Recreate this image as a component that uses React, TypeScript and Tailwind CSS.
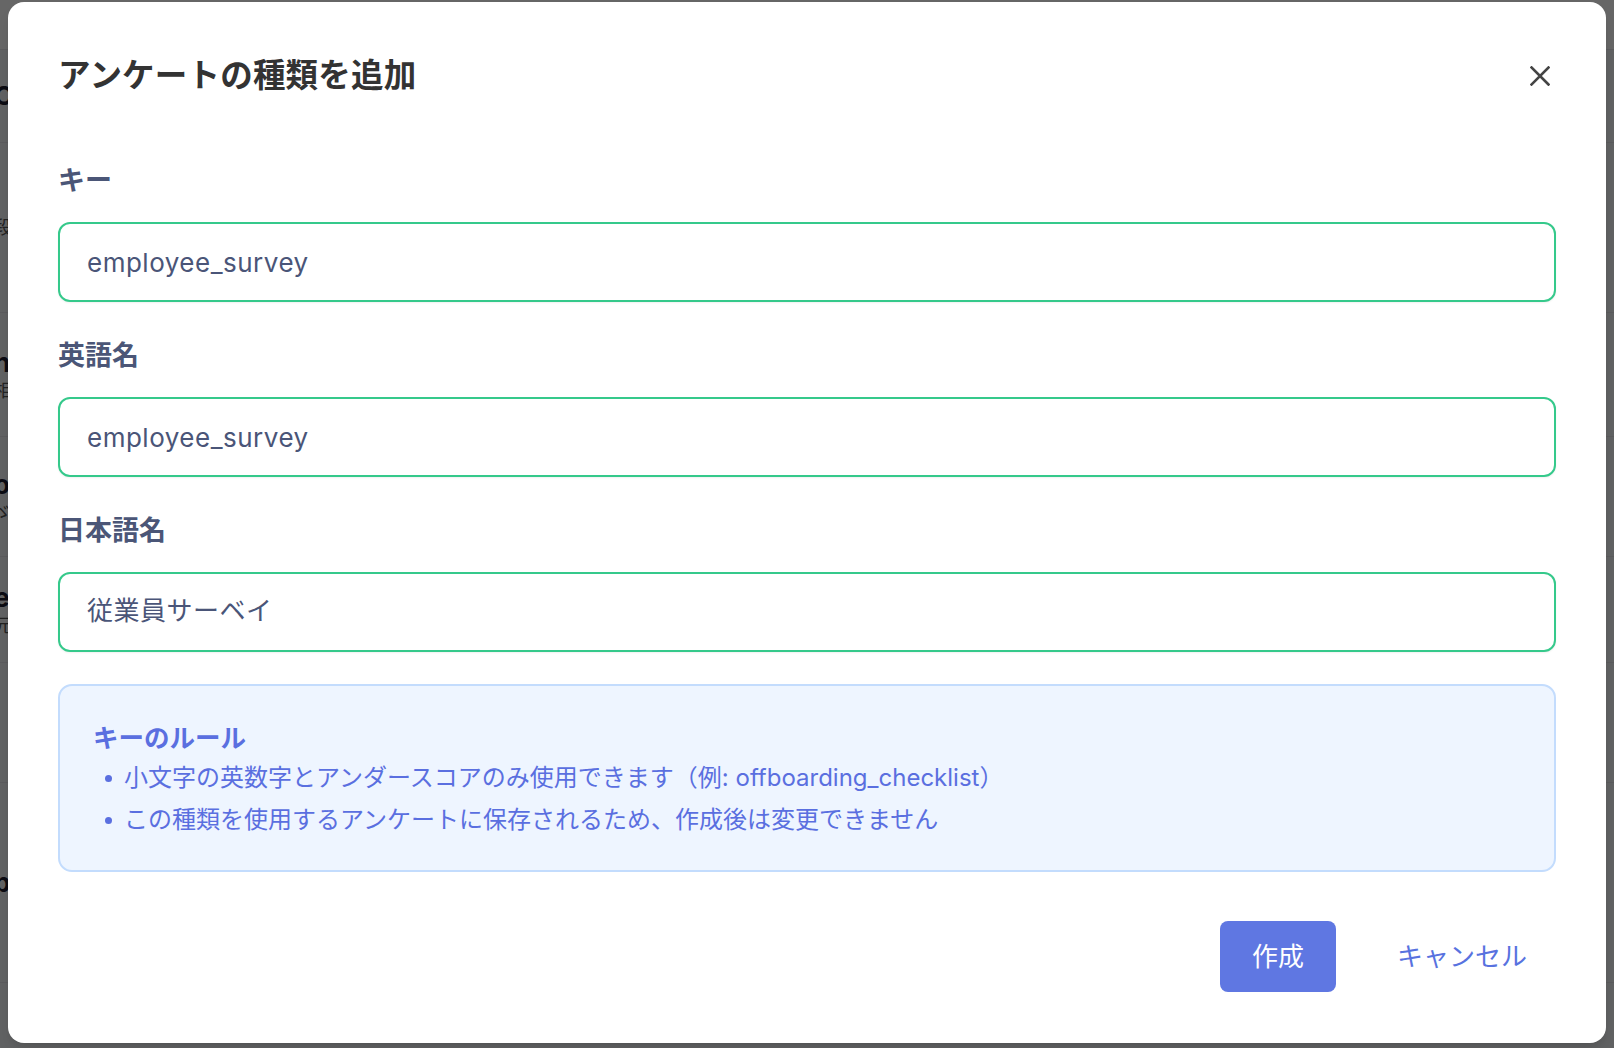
import { useState } from 'react'

const rules = [
  '小文字の英数字とアンダースコアのみ使用できます（例: offboarding_checklist）',
  'この種類を使用するアンケートに保存されるため、作成後は変更できません',
]

// page behind the overlay, only a sliver of it shows on the left edge
const bgRows = [
  { h: 'h-[93px]', a: 'C', b: '' },
  { h: 'h-[170px]', a: '', b: '段' },
  { h: 'h-[124px]', a: 'n', b: '相' },
  { h: 'h-[120px]', a: 'o', b: 'ゞ' },
  { h: 'h-[106px]', a: 'e', b: '元' },
  { h: 'h-[120px]', a: '', b: '' },
  { h: 'h-[200px]', a: 'p', b: '' },
]

export default function App() {
  const [form, setForm] = useState({
    key: 'employee_survey',
    en: 'employee_survey',
    ja: '従業員サーベイ',
  })

  const fields: { id: 'key' | 'en' | 'ja'; label: string }[] = [
    { id: 'key', label: 'キー' },
    { id: 'en', label: '英語名' },
    { id: 'ja', label: '日本語名' },
  ]

  return (
    <div className="relative h-[1048px] w-full overflow-hidden bg-[#f3f4f7] font-[Inter,'Noto_Sans_CJK_JP',sans-serif]">
      {/* Background page */}
      <div className="h-[50px] border-b border-[#e5e7eb] bg-white" />
      <div className="flex flex-col">
        {bgRows.map((r, i) => (
          <div key={i} className={`${r.h} flex flex-col justify-center border-b border-[#e3e4e8] -ml-[6px]`}>
            <span className="text-[26px] font-bold leading-8 text-[#1f2030]">{r.a}</span>
            <span className="text-[18px] leading-6 text-[#555]">{r.b}</span>
          </div>
        ))}
      </div>

      {/* Overlay */}
      <div className="absolute inset-0 bg-black/60 px-2 pt-[2px]">
        <div className="flex w-full flex-col rounded-[16px] bg-white px-[50px] pt-[50px] pb-[51px] shadow-lg">
          <div className="flex h-12 items-center justify-between">
            <h2 className="text-[32.5px] font-bold tracking-[0.2px] text-[#333333]">アンケートの種類を追加</h2>
            <button className="flex h-8 w-8 items-center justify-center text-[#444]">
              <svg width="20" height="20" viewBox="0 0 20 20" fill="none" stroke="currentColor" strokeWidth="2.6" strokeLinecap="square">
                <path d="M1.5 1.5 18.5 18.5M18.5 1.5 1.5 18.5" />
              </svg>
            </button>
          </div>

          <div className="mt-[61px] flex flex-col gap-[34px]">
            {fields.map(f => (
              <div key={f.id} className="flex flex-col gap-[21px]">
                <label className="text-[27px] font-bold leading-10 text-[#4b5677]">{f.label}</label>
                <input
                  value={form[f.id]}
                  onChange={e => setForm(prev => ({ ...prev, [f.id]: e.target.value }))}
                  className={`h-[80px] w-full rounded-[12px] border-2 border-[#35c98b] bg-white px-[27px] text-[26px] tracking-[0.5px] text-[#4a5578] shadow-[0_1px_2px_rgba(0,0,0,0.06)] outline-none ${f.id === 'ja' ? 'pb-[7px]' : ''}`}
                />
              </div>
            ))}
          </div>

          <div className="mt-[32px] rounded-[14px] border-2 border-[#c3dcfd] bg-[#eef5ff] px-[33px] pt-[33px] pb-[29px]">
            <h3 className="text-[25.5px] font-bold leading-[38px] text-[#5a6fe0]">キーのルール</h3>
            <ul>
              {rules.map(r => (
                <li key={r} className="flex h-[42px] items-center text-[24px] text-[#5a6fe0]">
                  <span className="ml-[12px] mr-[12px] h-[7px] w-[7px] rounded-full bg-[#5a6fe0]" />
                  {r}
                </li>
              ))}
            </ul>
          </div>

          <div className="mt-[49px] flex items-center justify-end gap-[32px]">
            <button className="flex h-[71px] items-center rounded-[8px] bg-[#5f77e2] px-8 text-[26px] text-white">作成</button>
            <button className="flex h-[71px] items-center px-[29px] text-[26px] text-[#5872df]">キャンセル</button>
          </div>
        </div>
      </div>
    </div>
  )
}
